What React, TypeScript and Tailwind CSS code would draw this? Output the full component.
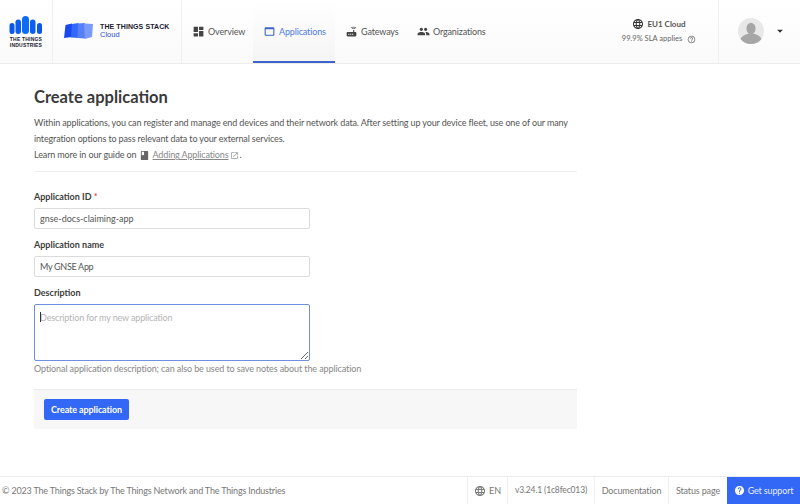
import { MdDashboard, MdWebAsset, MdRouter, MdPeople, MdLanguage, MdHelpOutline, MdHelp, MdBook, MdOpenInNew, MdArrowDropDown } from 'react-icons/md';

const navItems = [
  { label: 'Overview', icon: MdDashboard, width: 'w-[71px]', active: false },
  { label: 'Applications', icon: MdWebAsset, width: 'w-[82px]', active: true },
  { label: 'Gateways', icon: MdRouter, width: 'w-[72px]', active: false },
  { label: 'Organizations', icon: MdPeople, width: 'w-[90px]', active: false },
];

const Logo = () => (
  <svg width="34" height="18" viewBox="0 0 34 18">
    <rect x="0.5" y="7" width="5" height="11" rx="2.5" fill="#0b57e8" />
    <rect x="6.5" y="3.5" width="5.5" height="14.5" rx="2.7" fill="#0b5ff0" />
    <rect x="13" y="0" width="7" height="18" rx="3.5" fill="#0d6cf5" />
    <rect x="21" y="3.5" width="5.5" height="14.5" rx="2.7" fill="#0b5ff0" />
    <rect x="28" y="7" width="5" height="11" rx="2.5" fill="#0b57e8" />
  </svg>
);

const StackLogo = () => (
  <svg width="30" height="16" viewBox="0 0 30 16">
    <polygon points="1.5,2 8,0.5 8,14 0,15" fill="#1749f2" />
    <polygon points="8,1 14.5,0 14.5,15 7,14.5" fill="#3568f7" />
    <polygon points="14,0.5 21,0 21,15.5 13.5,15" fill="#5680fa" />
    <polygon points="20,0.5 29,1 28,14 21,16" fill="#7a9bfb" />
  </svg>
);

const Avatar = () => (
  <svg width="26" height="26" viewBox="0 0 26 26">
    <circle cx="13" cy="13" r="13" fill="#e8e8e8" />
    <ellipse cx="13" cy="10.5" rx="4.6" ry="5.8" fill="#a6a6a6" />
    <path d="M2.5 21 C4 17.5 8 16.5 10.5 15.5 L15.5 15.5 C18 16.5 22 17.5 23.5 21 C21 24.2 17.2 26 13 26 C8.8 26 5 24.2 2.5 21 Z" fill="#a6a6a6" />
  </svg>
);

const labelClass = 'block text-[9px] leading-[14px] font-bold text-[#3d3d3d] mb-[4px]';
const inputClass = 'block w-[276px] h-[21px] border border-[#dcdcdc] rounded-[2px] bg-white px-[5px] text-[9px] text-[#555] outline-none';

export default function App() {
  return (
    <div className="w-[800px] h-[504px] flex flex-col bg-white overflow-hidden text-[#4a4a4a]" style={{ fontFamily: 'Lato, sans-serif' }}>
      <header className="h-[64px] flex border-b border-[#ececec] bg-gradient-to-b from-white to-[#fafafa]">
        <div className="w-[53px] flex flex-col items-center pt-[16px] border-r border-[#f0f0f0]">
          <Logo />
          <div className="mt-[2px] text-[5px] leading-[6px] font-bold text-center text-[#1a1a2e] tracking-[0.2px]" style={{ fontFamily: '"Liberation Sans", sans-serif' }}>
            THE THINGS<br />INDUSTRIES
          </div>
        </div>
        <div className="w-[129px] flex items-center pl-[11px] gap-[6px] border-r border-[#f0f0f0] pb-[2px]">
          <StackLogo />
          <div style={{ fontFamily: '"Liberation Sans", sans-serif' }}>
            <div className="text-[7px] leading-[8px] font-bold text-[#1a1a2e] tracking-[0.1px] whitespace-nowrap">THE THINGS STACK</div>
            <div className="text-[7.5px] leading-[8px] text-[#2b55c8]">Cloud</div>
          </div>
        </div>
        <nav className="flex">
          {navItems.map((item) => (
            <div key={item.label} className={`${item.width} flex items-center pl-[10px] gap-[2px] text-[9px] tracking-[-0.15px] ${item.active ? 'pt-[2px] border-b-2 border-[#3b63c9] bg-gradient-to-b from-white to-[#f5f5f5] text-[#4f7be8]' : 'text-[#555]'}`}>
              <item.icon size={13} className={item.active ? 'text-[#3b63c9]' : 'text-[#444]'} />
              <span className="ml-[1px]">{item.label}</span>
            </div>
          ))}
        </nav>
        <div className="flex-1" />
        <div className="w-[110px] pr-[8px] flex flex-col items-center justify-center">
          <div className="flex items-center gap-[3px] text-[8px] font-bold text-[#555] whitespace-nowrap">
            <MdLanguage size={12} className="text-[#333]" />
            EU1 Cloud
          </div>
          <div className="flex items-center gap-[5px] text-[7.5px] text-[#666] mt-[3px] whitespace-nowrap">
            99.9% SLA applies
            <MdHelpOutline size={9} className="text-[#777]" />
          </div>
        </div>
        <div className="w-[82px] flex items-center pl-[19px] pb-[1px] border-l border-[#f0f0f0]">
          <Avatar />
          <MdArrowDropDown size={14} className="ml-[9px] text-[#333]" />
        </div>
      </header>
      <main className="flex-1 pl-[34px] pt-[22px]">
        <div className="w-[543px]">
          <h1 className="text-[16.5px] leading-[22px] font-bold text-[#3a3a3a]">Create application</h1>
          <div className="mt-[7px] pb-[8px] border-b border-[#eeeeee] text-[9px] tracking-[-0.13px] leading-[16px] text-[#555]">
            <p>Within applications, you can register and manage end devices and their network data. After setting up your device fleet, use one of our many<br />integration options to pass relevant data to your external services.</p>
            <p className="flex items-center">
              Learn more in our guide on
              <MdBook size={11} className="ml-[3px] mr-[2px] text-[#666]" />
              <span className="underline text-[#888]">Adding Applications</span>
              <MdOpenInNew size={9} className="ml-[1px] text-[#999]" />
              <span className="ml-[1px]">.</span>
            </p>
          </div>
          <form className="mt-[18px]">
            <label className={labelClass}>Application ID<span className="text-[#e05555]"> *</span></label>
            <input className={inputClass} defaultValue="gnse-docs-claiming-app" />
            <label className={`${labelClass} mt-[9px]`}>Application name</label>
            <input className={`${inputClass} tracking-[-0.3px]`} defaultValue="My GNSE App" />
            <label className={`${labelClass} mt-[9px]`}>Description</label>
            <div className="relative w-[276px]">
              <textarea className="block w-[276px] h-[57px] border border-[#6f8fe0] rounded-[2px] bg-white px-[5px] py-[6px] text-[9px] tracking-[-0.15px] outline-none placeholder:text-[#b5b5b5]" placeholder="Description for my new application" />
              <span className="absolute left-[6px] top-[8px] w-px h-[10px] bg-[#333]" />
            </div>
            <p className="mt-[1px] text-[9px] tracking-[-0.1px] leading-[14px] text-[#888]">Optional application description; can also be used to save notes about the application</p>
            <div className="mt-[13px] h-[40px] bg-[#f7f7f7] border-t border-[#ececec] flex items-center pl-[10px]">
              <button type="button" className="w-[85px] h-[21px] rounded-[2px] bg-[#3367f5] text-white text-[9px] tracking-[-0.1px] font-bold">Create application</button>
            </div>
          </form>
        </div>
      </main>
      <footer className="h-[28px] flex items-stretch border-t border-[#ececec] text-[9px] tracking-[-0.15px] text-[#777]">
        <div className="flex-1 flex items-center pl-[2px] tracking-[-0.18px]">© 2023 The Things Stack by The Things Network and The Things Industries</div>
        <div className="w-[40px] flex items-center justify-center gap-[3px] border-l border-[#f0f0f0]"><MdLanguage size={12} />EN</div>
        <div className="w-[87px] flex items-center justify-center border-l border-[#f0f0f0] whitespace-nowrap text-[8.5px]">v3.24.1 (1c8fec013)</div>
        <div className="w-[74px] flex items-center justify-center border-l border-[#f0f0f0]">Documentation</div>
        <div className="w-[59px] flex items-center justify-center border-l border-[#f0f0f0] whitespace-nowrap">Status page</div>
        <div className="w-[73px] flex items-center justify-center gap-[3px] bg-[#3367f5] text-[#e6ecff] whitespace-nowrap"><MdHelp size={11} className="text-white" />Get support</div>
      </footer>
    </div>
  );
}
